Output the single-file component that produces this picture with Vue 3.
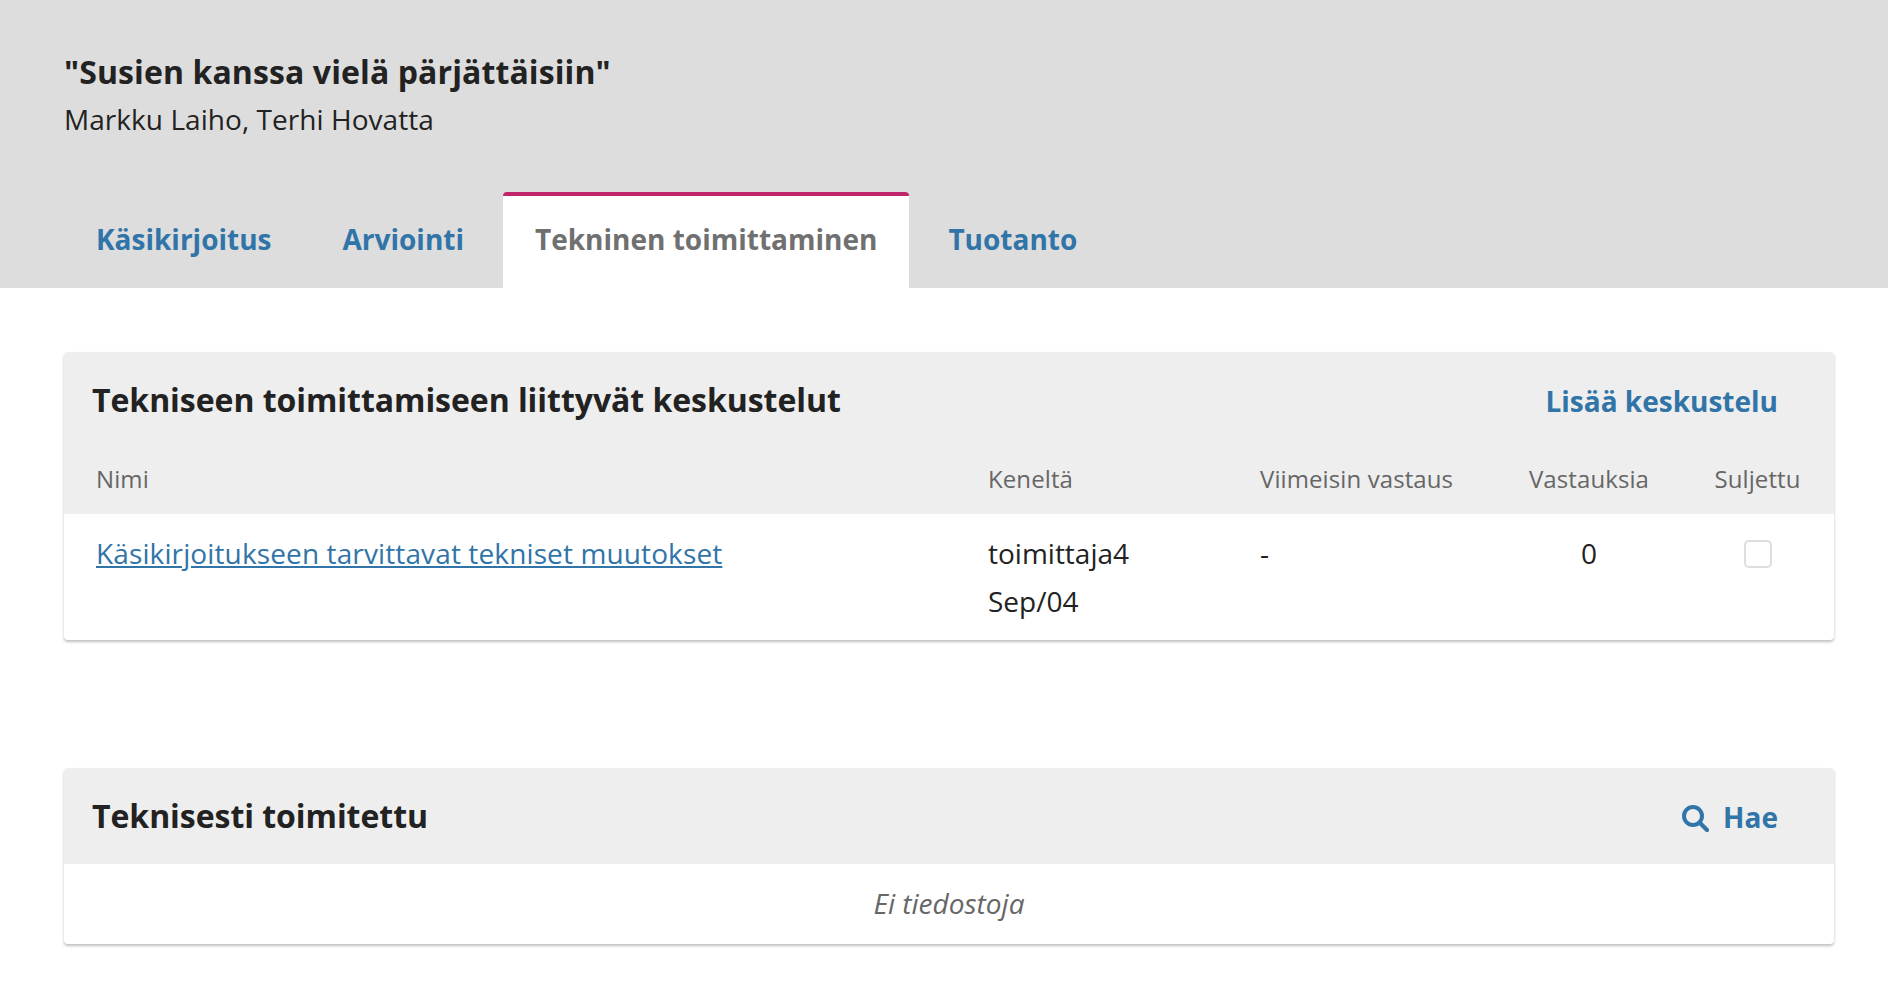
<script setup>
const tabs = [
  { label: 'Käsikirjoitus' },
  { label: 'Arviointi' },
  { label: 'Tekninen toimittaminen', active: true },
  { label: 'Tuotanto' }
]

const columns = ['Nimi', 'Keneltä', 'Viimeisin vastaus', 'Vastauksia', 'Suljettu']
</script>

<template>
  <div class="page">
    <header class="top">
      <div class="title">"Susien kanssa vielä pärjättäisiin"</div>
      <div class="authors">Markku Laiho, Terhi Hovatta</div>
      <nav class="tabs">
        <a v-for="tab in tabs" :key="tab.label" class="tab" :class="{ active: tab.active }" href="#">{{ tab.label }}</a>
      </nav>
    </header>

    <main class="content">
      <section class="card first">
        <div class="card-head">
          <h2>Tekniseen toimittamiseen liittyvät keskustelut</h2>
          <a class="action" href="#">Lisää keskustelu</a>
        </div>
        <div class="grid labels">
          <span v-for="(col, i) in columns" :key="col" :class="{ center: i > 2, closed: i === 4 }">{{ col }}</span>
        </div>
        <div class="grid row">
          <a class="link" href="#">Käsikirjoitukseen tarvittavat tekniset muutokset</a>
          <div>toimittaja4<br>Sep/04</div>
          <div>-</div>
          <div class="center">0</div>
          <div class="center closed"><span class="check"></span></div>
        </div>
      </section>

      <section class="card second">
        <div class="card-head short">
          <h2>Teknisesti toimitettu</h2>
          <a class="action search" href="#">
            <svg class="search-icon" width="27" height="27" viewBox="0 0 27 27" fill="none" stroke="currentColor">
              <circle cx="11" cy="11" r="9" stroke-width="4" />
              <path d="M17.5 17.5 L25 25" stroke-width="4.2" stroke-linecap="round" />
            </svg>
            Hae
          </a>
        </div>
        <div class="empty">Ei tiedostoja</div>
      </section>
    </main>
  </div>
</template>

<style>
html, body {
  margin: 0;
  background: #fff;
}
</style>

<style scoped>
.page {
  font-family: "Open Sans", sans-serif;
  font-size: 28px;
  line-height: 48px;
  color: #222;
  height: 992px;
  overflow: hidden;
}
a {
  color: #3174a8;
}
.top {
  background: #ddd;
  height: 288px;
  box-sizing: border-box;
  padding: 48px 0 0 64px;
  display: flex;
  flex-direction: column;
}
.title {
  font-size: 32px;
  font-weight: 700;
  letter-spacing: 0.1px;
}
.authors {
  margin-top: -1px;
  letter-spacing: 0.05px;
}
.tabs {
  display: flex;
  gap: 7px;
  margin-top: auto;
}
.tab {
  display: block;
  height: 96px;
  box-sizing: border-box;
  padding: 23px 32px 0;
  font-weight: 700;
  text-decoration: none;
}
.tab.active {
  background: #fff;
  color: #707070;
  border-top: 4px solid #c0246a;
  border-radius: 4px 4px 0 0;
  padding-top: 19px;
}
.content {
  padding: 64px 54px 0 64px;
}
.card {
  background: #fff;
  border-radius: 4px;
  box-shadow: 0 2px 3px rgba(0, 0, 0, 0.25);
  overflow: hidden;
}
.second {
  margin-top: 128px;
}
.card-head {
  background: #eee;
  display: flex;
  justify-content: space-between;
  padding: 24px 56px 0 28px;
  height: 72px;
}
.card-head.short {
  height: 96px;
  box-sizing: border-box;
}
h2 {
  margin: 0;
  font-size: 32px;
  line-height: 48px;
  font-weight: 700;
  letter-spacing: -0.05px;
}
.action {
  font-weight: 700;
  text-decoration: none;
  padding-top: 1px;
}
.search {
  display: flex;
  align-items: center;
  gap: 14px;
  height: 48px;
}
.search-icon {
  margin-top: 3px;
}
.grid {
  display: grid;
  grid-template-columns: 892px 272px 239px 180px 155px;
  padding-left: 32px;
}
.labels {
  background: #eee;
  color: #666;
  font-size: 24px;
  letter-spacing: 0.1px;
  height: 66px;
  box-sizing: border-box;
  padding-top: 7px;
}
.row {
  height: 126px;
  box-sizing: border-box;
  padding-top: 15px;
}
.link {
  text-decoration: underline;
  letter-spacing: 0.12px;
  justify-self: start;
  height: 48px;
}
.center {
  text-align: center;
}
.closed {
  padding-left: 2px;
}
.check {
  display: inline-block;
  width: 28px;
  height: 28px;
  box-sizing: border-box;
  border: 2px solid #ddd;
  border-radius: 5px;
  vertical-align: middle;
  position: relative;
  top: -3px;
}
.empty {
  height: 80px;
  box-sizing: border-box;
  padding-top: 15px;
  text-align: center;
  font-style: italic;
  color: #666;
}
</style>
